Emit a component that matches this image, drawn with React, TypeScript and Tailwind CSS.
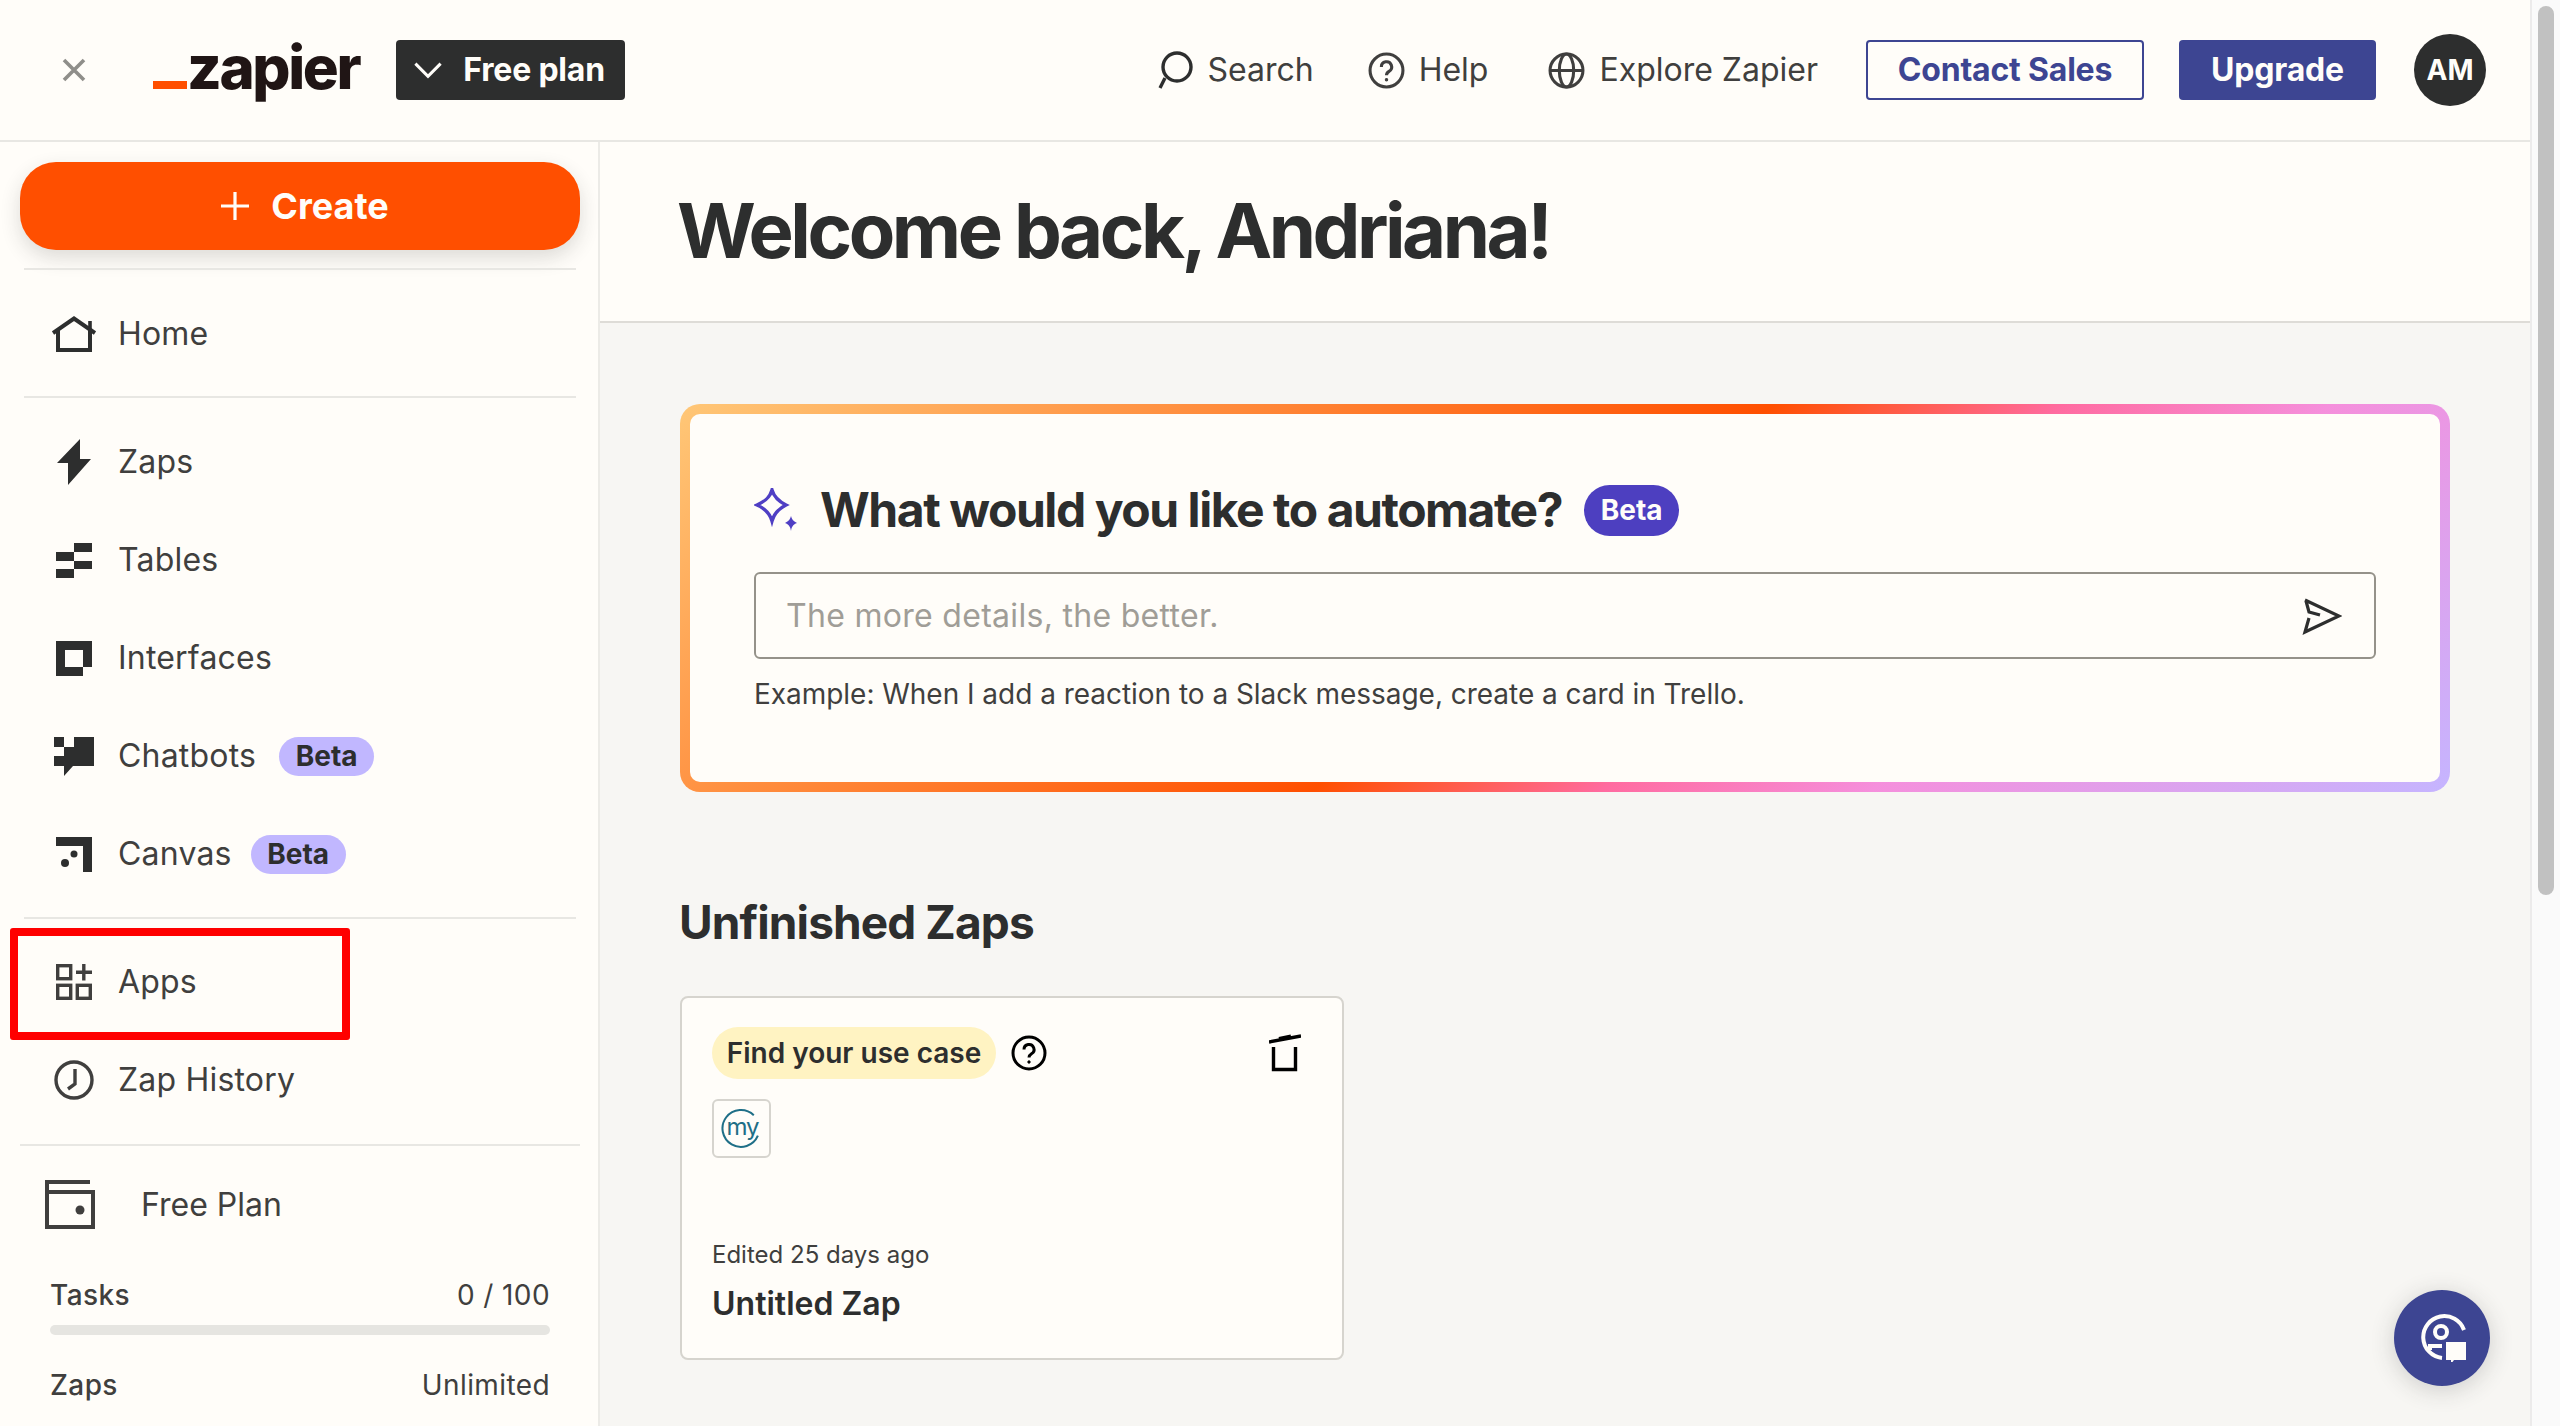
import React from "react";

const HelpIcon = ({ className, stroke = "currentColor" }: { className: string; stroke?: string }) => (
  <svg viewBox="0 0 36 36" className={className} fill="none" stroke={stroke} strokeWidth="3">
    <circle cx="18" cy="18" r="16" />
    <path d="M13 14.5a5 5 0 1 1 7.5 4.3c-1.6 1-2.5 1.9-2.5 3.7" />
    <circle cx="18" cy="27" r="1.2" fill={stroke} strokeWidth="1" />
  </svg>
);

const HomeIcon = () => (
  <svg viewBox="0 0 44 36" className="w-[44px] h-[36px]" fill="none" stroke="#2d2e2e" strokeWidth="4">
    <path d="M4 34h33M6 36V14M38 36V14M1 17 22 2.500l21 14.500" />
    <path d="M38 5v8" strokeWidth="3.600" />
  </svg>
);

const BoltIcon = () => (
  <svg viewBox="0 0 34 46" className="w-[34px] h-[46px]" fill="#2d2e2e">
    <path d="M23 0v20h11L11 46V24H0z" />
  </svg>
);

const TablesIcon = () => (
  <svg viewBox="0 0 36 35" className="w-[36px] h-[35px]" fill="#2d2e2e">
    <path d="M18 0h18v9H18zM0 9h18v9H0zM18 18h18v8H18zM0 26h18v9H0z" />
  </svg>
);

const InterfacesIcon = () => (
  <svg viewBox="0 0 36 35" className="w-[36px] h-[35px]" fill="#2d2e2e">
    <path fillRule="evenodd" d="M0 0h36v26h-9v9H0zM9 9v17h18V9z" />
  </svg>
);

const ChatbotsIcon = () => (
  <svg viewBox="0 0 40 39" className="w-[40px] h-[39px]" fill="#2d2e2e">
    <path d="M0 0h10v10H0zM20 0h20v29H19l-9 10V29H0V19h10v-9h10z" />
  </svg>
);

const CanvasIcon = () => (
  <svg viewBox="0 0 36 35" className="w-[36px] h-[35px]" fill="#2d2e2e">
    <path d="M0 0h36v35h-9V9H0z" />
    <circle cx="18" cy="17" r="3.500" />
    <circle cx="9" cy="26" r="4" />
  </svg>
);

const AppsIcon = () => (
  <svg viewBox="0 0 36 36" className="w-[36px] h-[36px]" fill="none" stroke="#403f3e" strokeWidth="3.400">
    <rect x="1.700" y="1.700" width="13" height="13" />
    <rect x="1.700" y="21.300" width="13" height="13" />
    <rect x="21.300" y="21.300" width="13" height="13" />
    <path d="M27.800 0v16.500M20 8.200h16" />
  </svg>
);

const ClockIcon = () => (
  <svg viewBox="0 0 40 40" className="w-[40px] h-[40px]" fill="none" stroke="#403f3e" strokeWidth="3.400">
    <circle cx="20" cy="20" r="18" />
    <path d="M21 9v15l-7 5" />
  </svg>
);

const WalletIcon = () => (
  <svg viewBox="0 0 50 50" className="w-[50px] h-[50px]" fill="none" stroke="#403f3e" strokeWidth="4">
    <path d="M45 2H2v45h46V12H2" />
    <circle cx="35" cy="30" r="4.500" fill="#403f3e" stroke="none" />
  </svg>
);

const NavRow = ({ icon, label, betaGap }: { icon: React.ReactNode; label: string; betaGap?: string }) => (
  <div className="flex items-center h-[98px] pl-[50px]">
    <div className="w-[48px] flex justify-center shrink-0">{icon}</div>
    <span className="ml-[20px] text-[32px] leading-[48px] text-[#403f3e] tracking-[0.2px]">{label}</span>
    {betaGap && (
      <span className={`${betaGap} h-[39px] w-[95px] rounded-full bg-[#c1b7ff] flex items-center justify-center text-[28px] font-bold text-[#2d2e2e]`}>
        Beta
      </span>
    )}
  </div>
);

const Divider = ({ className }: { className: string }) => <div className={`h-[2px] bg-[#e8e7e3] ${className}`} />;

const Sidebar = () => (
  <aside className="w-[600px] shrink-0 border-r-2 border-[#ecebe7] bg-[#fffdf9] pt-[20px] relative">
    <div className="ml-[20px] mr-[18px] pl-[10px] h-[88px] rounded-[36px] bg-[#ff4f00] shadow-[0_8px_20px_rgba(45,46,46,0.16)] flex items-center justify-center gap-[22px]">
      <svg viewBox="0 0 28 28" className="w-[28px] h-[28px]" fill="none" stroke="#fffdf9" strokeWidth="3.200">
        <path d="M14 0v28M0 14h28" />
      </svg>
      <span className="text-[36px] font-bold text-[#fffdf9]">Create</span>
    </div>
    <Divider className="ml-[24px] mr-[22px] mt-[18px]" />
    <div className="pt-[15px] pb-[13px]">
      <NavRow icon={<HomeIcon />} label="Home" />
    </div>
    <Divider className="ml-[24px] mr-[22px]" />
    <div className="pt-[15px] pb-[14px]">
      <NavRow icon={<BoltIcon />} label="Zaps" />
      <NavRow icon={<TablesIcon />} label="Tables" />
      <NavRow icon={<InterfacesIcon />} label="Interfaces" />
      <NavRow icon={<ChatbotsIcon />} label="Chatbots" betaGap="ml-[23px]" />
      <NavRow icon={<CanvasIcon />} label="Canvas" betaGap="ml-[19px]" />
    </div>
    <Divider className="ml-[24px] mr-[22px]" />
    <div className="pt-[14px] pb-[15px]">
      <NavRow icon={<AppsIcon />} label="Apps" />
      <NavRow icon={<ClockIcon />} label="Zap History" />
    </div>
    <Divider className="ml-[20px] mr-[18px]" />
    <div className="flex items-center pl-[45px] mt-[34px]">
      <WalletIcon />
      <span className="ml-[46px] text-[32px] leading-[48px] text-[#403f3e]">Free Plan</span>
    </div>
    <div className="ml-[50px] mr-[48px] mt-[43px] flex justify-between text-[28px] leading-[44px] text-[#403f3e] tracking-[0.4px]">
      <span className="font-medium">Tasks</span>
      <span>0 / 100</span>
    </div>
    <div className="ml-[50px] mr-[48px] mt-[8px] h-[10px] rounded-full bg-[#e6e5e1]" />
    <div className="ml-[50px] mr-[48px] mt-[28px] flex justify-between text-[28px] leading-[44px] text-[#403f3e] tracking-[0.4px]">
      <span className="font-medium">Zaps</span>
      <span>Unlimited</span>
    </div>
    {/* red annotation box */}
    <div className="absolute left-[10px] top-[786px] w-[340px] h-[112px] border-[8px] border-[#ff0000] rounded-[3px]" />
  </aside>
);

const Header = () => (
  <header className="h-[142px] shrink-0 border-b-2 border-[#e8e7e3] bg-[#fffdf9] flex items-center pl-[62px] pr-[44px]">
    <svg viewBox="0 0 24 24" className="w-[24px] h-[24px]" fill="none" stroke="#8f8e8a" strokeWidth="3.600">
      <path d="M2 2l20 20M22 2 2 22" />
    </svg>
    <div className="ml-[67px] flex items-end">
      <div className="w-[34px] h-[8px] bg-[#ff4f00] mb-[15px]" />
      <span className="text-[60px] leading-[62px] font-extrabold tracking-[-2.400px] text-[#201515] mb-[6px]">zapier</span>
    </div>
    <div className="ml-[37px] w-[229px] h-[60px] rounded-[4px] bg-[#2d2e2e] flex items-center pl-[18px]">
      <svg viewBox="0 0 30 20" className="w-[28px] h-[18px]" fill="none" stroke="#fffdf9" strokeWidth="3.400">
        <path d="M1 3l14 14L29 3" />
      </svg>
      <span className="ml-[21px] text-[32px] font-bold text-[#fffdf9] tracking-[-0.2px]">Free plan</span>
    </div>
    <div className="flex-1" />
    <div className="flex items-center text-[32px] text-[#403f3e]">
      <svg viewBox="0 0 38 38" className="w-[38px] h-[38px]" fill="none" stroke="#2d2e2e" strokeWidth="3.400">
        <circle cx="21" cy="16" r="14" />
        <path d="M9 27l-5 10" />
      </svg>
      <span className="ml-[13px]">Search</span>
      <HelpIcon className="ml-[54px] w-[37px] h-[37px] text-[#403f3e]" />
      <span className="ml-[14px]">Help</span>
      <svg viewBox="0 0 36 36" className="ml-[60px] w-[37px] h-[37px]" fill="none" stroke="#403f3e" strokeWidth="3">
        <circle cx="18" cy="18" r="16" />
        <ellipse cx="18" cy="18" rx="7" ry="16" />
        <path d="M2 18h32" />
      </svg>
      <span className="ml-[14px]">Explore Zapier</span>
    </div>
    <div className="ml-[48px] w-[278px] h-[60px] rounded-[4px] border-2 border-[#3d4592] flex items-center justify-center text-[32px] font-bold text-[#3d4592] tracking-[-0.2px]">
      Contact Sales
    </div>
    <div className="ml-[35px] w-[197px] h-[60px] rounded-[4px] bg-[#3d4592] flex items-center justify-center text-[32px] font-bold text-[#fffdf9] tracking-[-0.2px]">
      Upgrade
    </div>
    <div className="ml-[38px] w-[72px] h-[72px] rounded-full bg-[#2d2e2e] flex items-center justify-center text-[28px] font-bold text-[#fffdf9]">
      AM
    </div>
  </header>
);

const AutomateCard = () => (
  <div className="w-[1770px] h-[388px] rounded-[20px] p-[10px] bg-[linear-gradient(140deg,#ffc777_0%,#ff4f00_49%,#ff6ba0_62%,#f58fdc_74%,#c5b5ff_100%)]">
    <div className="h-full rounded-[10px] bg-[#fffdf9] pl-[64px] pr-[64px] pt-[68px]">
      <div className="flex items-center h-[56px]">
        <svg viewBox="0 0 44 44" className="w-[44px] h-[44px]" fill="none" stroke="#4f3fc4" strokeWidth="3.400">
          <path d="M18 2c2 7 6 11 14 15-8 4-12 9-14 16-2-7-6-12-15-16 9-4 13-8 15-15z" />
          <path d="M37 28c.6 3 2.200 5 6 7-3.800 1.500-5.400 3.500-6 8-.6-4.500-2.200-6.500-6-8 3.800-2 5.400-4 6-7z" fill="#4f3fc4" stroke="none" />
        </svg>
        <span className="ml-[22px] text-[48px] font-bold text-[#2d2e2e] tracking-[-1.450px]">What would you like to automate?</span>
        <span className="ml-[22px] w-[95px] h-[51px] rounded-full bg-[#4d3fc0] flex items-center justify-center text-[28px] font-bold text-[#fffdf9]">
          Beta
        </span>
      </div>
      <div className="mt-[34px] h-[87px] rounded-[6px] border-2 border-[#95928a] flex items-center pl-[30px] pr-[32px] justify-between">
        <span className="text-[32px] text-[#a09d97] tracking-[0.3px]">The more details, the better.</span>
        <svg viewBox="0 0 40 38" className="w-[40px] h-[38px]" fill="none" stroke="#2d2e2e" strokeWidth="3.200">
          <path d="M3 3l34 16L3 35l4-14 M4 4l3 11 11 3" />
        </svg>
      </div>
      <p className="mt-[14px] text-[28px] leading-[42px] text-[#403f3e] tracking-[-0.03px]">
        Example: When I add a reaction to a Slack message, create a card in Trello.
      </p>
    </div>
  </div>
);

const ZapCard = () => (
  <div className="mt-[44px] w-[664px] h-[364px] rounded-[8px] border-2 border-[#d6d4ce] bg-[#fffdf9] pl-[30px] pr-[41px] pt-[29px]">
    <div className="flex items-center">
      <span className="w-[284px] h-[52px] rounded-full bg-[#fff3c2] flex items-center justify-center text-[28px] font-semibold text-[#2d2e2e]">
        Find your use case
      </span>
      <HelpIcon className="ml-[15px] w-[36px] h-[36px]" stroke="#000000" />
      <div className="flex-1" />
      <svg viewBox="0 0 32 38" className="w-[32px] h-[38px]" fill="none" stroke="#000000" strokeWidth="3.400">
        <path d="M0 8l32-6M4.500 13v22.500h22V13" />
        <path d="M10 5l12-2.500" strokeWidth="4" />
      </svg>
    </div>
    <div className="mt-[20px] w-[59px] h-[59px] rounded-[6px] border-2 border-[#d6d4ce] bg-[#fffdf9] flex items-center justify-center relative">
      <svg viewBox="0 0 40 40" className="absolute left-[7px] top-[7px] w-[41px] h-[41px]" fill="none" stroke="#1f6f87" strokeWidth="2">
        <path d="M32 7A18 18 0 1 0 36 27" />
      </svg>
      <span className="relative left-[1px] text-[24px] leading-[24px] tracking-[-1px] text-[#1f6f87] mb-[3px]">my</span>
    </div>
    <p className="mt-[81px] text-[24px] leading-[32px] text-[#403f3e]">Edited 25 days ago</p>
    <p className="mt-[13px] text-[32px] leading-[40px] font-semibold text-[#2d2e2e]">Untitled Zap</p>
  </div>
);

const Main = () => (
  <main className="flex-1 min-w-0 bg-[#f7f6f3] relative overflow-hidden">
    <div className="h-[181px] border-b-2 border-[#dedcd7] bg-[#fffdf9] flex items-center pl-[77px]">
      <h1 className="mb-[3px] text-[76px] font-bold text-[#2d2e2e] tracking-[-3.500px]">Welcome back, Andriana!</h1>
    </div>
    <div className="pl-[80px] pt-[81px]">
      <AutomateCard />
      <h2 className="-ml-[1px] mt-[100px] text-[46px] leading-[60px] font-bold text-[#2d2e2e] tracking-[-0.9px]">Unfinished Zaps</h2>
      <ZapCard />
    </div>
    {/* help bubble */}
    <div className="absolute left-[1794px] top-[1148px] w-[96px] h-[96px] rounded-full bg-[#3d4592] shadow-[0_4px_24px_rgba(45,46,46,0.2)] flex items-center justify-center">
      <svg viewBox="0 0 48 48" className="w-[48px] h-[48px]" fill="none" stroke="#fffdf9" strokeWidth="4">
        <path d="M46 16A21 21 0 1 0 24 44" />
        <circle cx="23" cy="18" r="6" />
        <path d="M12 36v-4h12" />
        <path d="M28 28h20v18H36l-3 4v-4h-5z" fill="#fffdf9" stroke="none" />
      </svg>
    </div>
  </main>
);

const Scrollbar = () => (
  <div className="w-[30px] shrink-0 border-l-2 border-[#ecebeb] bg-[#fafafa] pl-[6px] pr-[6px] pt-[6px]">
    <div className="h-[889px] rounded-full bg-[#c1c1c1]" />
  </div>
);

export default function App() {
  return (
    <div className="w-[2560px] h-[1426px] flex overflow-hidden bg-[#fffdf9] font-['Inter',sans-serif]">
      <div className="flex-1 min-w-0 flex flex-col">
        <Header />
        <div className="flex-1 min-h-0 flex">
          <Sidebar />
          <Main />
        </div>
      </div>
      <Scrollbar />
    </div>
  );
}
